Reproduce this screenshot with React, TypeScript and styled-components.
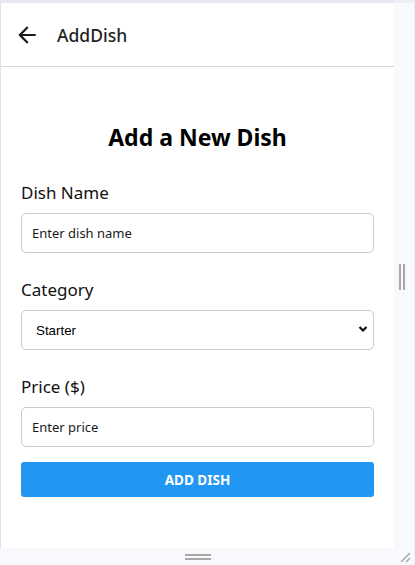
import React from "react";
import styled, { createGlobalStyle } from "styled-components";

const Global = createGlobalStyle`
  html, body { margin: 0; padding: 0; }
  body { background: #f7f9fd; font-family: "Noto Sans", "Open Sans", sans-serif; }
  * { box-sizing: border-box; }
`;

const Page = styled.div`
  width: 415px;
  height: 565px;
  display: grid;
  grid-template-columns: 394px 21px;
  grid-template-rows: 548px 17px;
  background: #f7f9fd;
  overflow: hidden;
`;

const Screen = styled.div`
  grid-column: 1;
  grid-row: 1;
  background: #ffffff;
  border-left: 1px solid #dfe2e8;
  border-top: 3px solid #e6e9ef;
  display: flex;
  flex-direction: column;
`;

const Header = styled.header`
  height: 64px;
  flex: none;
  display: flex;
  align-items: center;
  padding-left: 13px;
  gap: 17px;
  border-bottom: 1px solid #d8d8d8;
`;

const BackButton = styled.span`
  display: flex;
  width: 26px;
  height: 26px;
  color: #1a1a1a;
`;

const HeaderTitle = styled.span`
  font-size: 17.5px;
  font-weight: 500;
  color: #1f1f1f;
`;

const Body = styled.main`
  padding: 20px 20px;
  display: flex;
  flex-direction: column;
`;

const Title = styled.h2`
  margin: 37px 0 31px;
  font-size: 23px;
  line-height: 26px;
  font-weight: 700;
  text-align: center;
  color: #000;
`;

const Field = styled.div`
  display: flex;
  flex-direction: column;
  gap: 8px;
  margin-bottom: 25px;
`;

const Label = styled.label`
  font-size: 17px;
  line-height: 24px;
  color: #111;
`;

const Input = styled.input`
  height: 40px;
  width: 100%;
  border: 1px solid #cccccc;
  border-radius: 5px;
  padding: 0 10px;
  font-family: "Noto Sans", sans-serif;
  font-size: 13px;
  background: #fff;
  &::placeholder { color: #1a1a1a; opacity: 1; }
`;

const SelectWrap = styled.div`
  position: relative;
  height: 40px;
`;

const Select = styled.select`
  appearance: none;
  width: 100%;
  height: 40px;
  border: 1px solid #cccccc;
  border-radius: 5px;
  padding: 0 14px;
  font-family: "Liberation Sans", Arial, sans-serif;
  font-size: 13.33px;
  color: #000;
  background: #fff;
`;

const Chevron = styled.svg`
  position: absolute;
  right: 6px;
  top: 15px;
  pointer-events: none;
`;

const Button = styled.button`
  height: 35px;
  margin-top: -10px;
  border: none;
  border-radius: 3px;
  background: #2196f3;
  color: #fff;
  font-family: "Noto Sans", sans-serif;
  font-size: 13.5px;
  font-weight: 700;
`;

const SidePanel = styled.div`
  grid-column: 2;
  grid-row: 1 / span 2;
  display: flex;
  align-items: center;
  justify-content: flex-start;
  padding-left: 5px;
  border-top: 3px solid #eceff4;
  border-right: 1px solid #eceff5;
  position: relative;
`;

const VHandle = styled.div`
  width: 6px;
  height: 26px;
  border-left: 2px solid #a8a8a8;
  border-right: 2px solid #a8a8a8;
  margin-top: -15px;
`;

const BottomPanel = styled.div`
  grid-column: 1;
  grid-row: 2;
  display: flex;
  justify-content: center;
  align-items: center;
`;

const HHandle = styled.div`
  width: 26px;
  height: 6px;
  border-top: 2px solid #a8a8a8;
  border-bottom: 2px solid #a8a8a8;
  margin-left: 2px;
`;

const Corner = styled.svg`
  position: absolute;
  right: 3px;
  bottom: 2px;
`;

export default function App() {
  return (
    <>
      <Global />
      <Page>
        <Screen>
          <Header>
            <BackButton>
              <svg width="26" height="26" viewBox="0 0 24 24" fill="currentColor">
                <path d="M20 11H7.83l5.59-5.59L12 4l-8 8 8 8 1.41-1.41L7.83 13H20v-2z" />
              </svg>
            </BackButton>
            <HeaderTitle>AddDish</HeaderTitle>
          </Header>
          <Body>
            <Title>Add a New Dish</Title>
            <Field>
              <Label>Dish Name</Label>
              <Input placeholder="Enter dish name" />
            </Field>
            <Field>
              <Label>Category</Label>
              <SelectWrap>
                <Select defaultValue="Starter">
                  <option>Starter</option>
                  <option>Main Course</option>
                  <option>Dessert</option>
                </Select>
                <Chevron width="10" height="8" viewBox="0 0 10 8">
                  <path d="M1.5 2l3.5 3.5L8.5 2" stroke="#111" strokeWidth="2.2" fill="none" />
                </Chevron>
              </SelectWrap>
            </Field>
            <Field>
              <Label>Price ($)</Label>
              <Input placeholder="Enter price" />
            </Field>
            <Button>ADD DISH</Button>
          </Body>
        </Screen>
        <SidePanel>
          <VHandle />
          <Corner width="14" height="14" viewBox="0 0 14 14">
            <path d="M13 4L4 13M13 9L9 13" stroke="#a8a8a8" strokeWidth="1.5" />
          </Corner>
        </SidePanel>
        <BottomPanel>
          <HHandle />
        </BottomPanel>
      </Page>
    </>
  );
}
